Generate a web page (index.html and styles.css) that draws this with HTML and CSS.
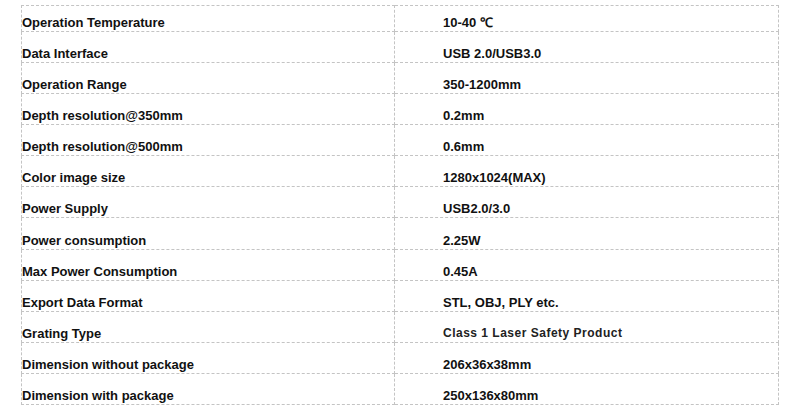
FILE: index.html
```html
<!DOCTYPE html>
<html>
<head>
<meta charset="utf-8">
<link rel="stylesheet" href="styles.css">
</head>
<body>
<table class="spec">
<tr class="first"><td class="k">Operation Temperature</td><td class="v">10-40 ℃</td></tr>
<tr><td class="k">Data Interface</td><td class="v">USB 2.0/USB3.0</td></tr>
<tr><td class="k">Operation Range</td><td class="v">350-1200mm</td></tr>
<tr><td class="k">Depth resolution@350mm</td><td class="v">0.2mm</td></tr>
<tr><td class="k">Depth resolution@500mm</td><td class="v">0.6mm</td></tr>
<tr><td class="k">Color image size</td><td class="v">1280x1024(MAX)</td></tr>
<tr><td class="k">Power Supply</td><td class="v">USB2.0/3.0</td></tr>
<tr><td class="k">Power consumption</td><td class="v">2.25W</td></tr>
<tr><td class="k">Max Power Consumption</td><td class="v">0.45A</td></tr>
<tr><td class="k">Export Data Format</td><td class="v">STL, OBJ, PLY etc.</td></tr>
<tr><td class="k">Grating Type</td><td class="v light">Class 1 Laser Safety Product</td></tr>
<tr><td class="k">Dimension without package</td><td class="v">206x36x38mm</td></tr>
<tr><td class="k">Dimension with package</td><td class="v">250x136x80mm</td></tr>
</table>
</body>
</html>
```
FILE: styles.css
```css
html, body {
  margin: 0;
  padding: 0;
  background: #ffffff;
}
body {
  padding: 5px 0 0 21px;
  font-family: "Liberation Sans", Arial, sans-serif;
  color: #111111;
}
.spec {
  border-collapse: collapse;
  width: 758px;
  table-layout: fixed;
}
.spec td {
  border: 1px dashed #c4c4c4;
  height: 31.08px;
  box-sizing: border-box;
  vertical-align: bottom;
  padding: 0 0 1px 0;
  font-size: 13px;
  font-weight: bold;
  line-height: 15px;
  white-space: nowrap;
}
.spec tr.first td {
  height: 26px;
}
.spec td.k {
  width: 373px;
  padding-left: 0;
}
.spec td.v {
  padding-left: 48px;
}
.spec td.light {
  font-size: 12px;
  letter-spacing: 0.5px;
  color: #222222;
}
```
